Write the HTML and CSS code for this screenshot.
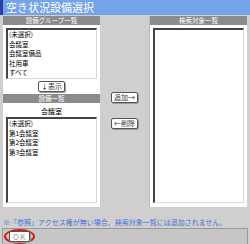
FILE: index.html
```html
<!DOCTYPE html>
<html lang="ja">
<head>
    <meta charset="UTF-8">
    <title>空き状況設備選択</title>
    <link rel="stylesheet" href="styles.css">
</head>
<body>
    <div class="title">空き状況設備選択</div>
    <div class="main">
        <div class="col">
            <div class="head">設備グループ一覧</div>
            <div class="panel group-panel">
                <div class="listbox group-list">
                    <div>(未選択)</div>
                    <div>会議室</div>
                    <div>会議室備品</div>
                    <div>社用車</div>
                    <div>すべて</div>
                </div>
                <button class="btn">↓表示</button>
            </div>
            <div class="head">設備一覧</div>
            <div class="panel fill">
                <div class="label">会議室</div>
                <div class="listbox fill">
                    <div>(未選択)</div>
                    <div>第1会議室</div>
                    <div>第2会議室</div>
                    <div>第3会議室</div>
                </div>
            </div>
        </div>
        <div class="middle">
            <button class="btn">追加→</button>
            <button class="btn">←削除</button>
        </div>
        <div class="col">
            <div class="head">検索対象一覧</div>
            <div class="panel fill">
                <div class="listbox fill"></div>
            </div>
        </div>
    </div>
    <div class="note">※「参照」アクセス権が無い場合、検索対象一覧には追加されません。</div>
    <div class="footer">
        <span class="ok-wrap"><button class="btn ok">OK</button></span>
    </div>
</body>
</html>
```

FILE: styles.css
```css
body {
    margin: 0;
    width: 250px;
    height: 244px;
    background-color: #cfcfcf;
    font-family: "Noto Sans CJK JP", "DejaVu Sans", sans-serif;
    font-size: 8px;
    overflow: hidden;
}
.title {
    height: 15px;
    line-height: 15px;
    background-color: #74a3ea;
    border-left: 3px solid #2a3fae;
    padding-left: 3px;
    color: #fff;
    font-size: 11px;
    white-space: nowrap;
}
.main {
    display: flex;
    height: 191px;
    padding: 1px 3px 0 3px;
}
.col {
    width: 97px;
    display: flex;
    flex-direction: column;
}
.head {
    height: 9px;
    line-height: 9px;
    background-color: #8b8b8b;
    color: #fff;
    text-align: center;
    font-size: 6.5px;
}
.panel {
    background-color: #fff;
    padding: 3px 3px 4px 3px;
    display: flex;
    flex-direction: column;
    align-items: center;
}
.group-panel {
    padding-bottom: 2px;
}
.fill {
    flex: 1;
    align-self: stretch;
}
.label {
    font-size: 7px;
    line-height: 10px;
    margin-bottom: 1px;
}
.listbox {
    align-self: stretch;
    background-color: #fff;
    border: 1px solid #d8d8d8;
    border-top: 2px solid #444;
    border-left: 2px solid #444;
    padding: 0 1px;
    font-size: 6.5px;
    line-height: 9.5px;
    white-space: nowrap;
    overflow: hidden;
}
.group-list {
    height: 48px;
}
.btn {
    font-family: inherit;
    font-size: 7px;
    line-height: 7px;
    padding: 1px 2px;
    margin-top: 2px;
    background-color: #fff;
    border: 1px solid #555;
    border-radius: 2px;
    box-shadow: 1px 1px 0 #999;
    color: #333;
}
.middle {
    width: 49px;
    display: flex;
    flex-direction: column;
    align-items: center;
    padding-top: 74px;
    gap: 13px;
    border-right: 1px solid #bbb;
}
.note {
    margin: 11px 0 0 3px;
    color: #4a6fdc;
    font-size: 7px;
    line-height: 8px;
    white-space: nowrap;
}
.footer {
    margin: 2px 2px 0 2px;
    height: 15px;
    background-color: #c6c6c6;
    border: 1px solid #9a9a9a;
    display: flex;
    align-items: center;
    padding-left: 1px;
}
.ok-wrap {
    border: 2px solid #e01010;
    border-radius: 50%;
    padding: 0 3px;
}
.ok {
    margin: 0;
    font-size: 8px;
    padding: 1px 3px;
    letter-spacing: 1px;
    color: #999;
}
```
